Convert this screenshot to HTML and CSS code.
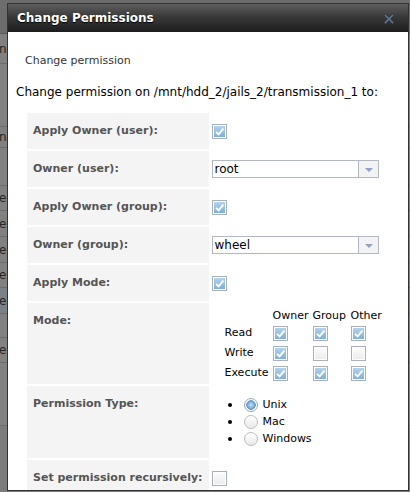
FILE: index.html
```html
<!DOCTYPE html>
<html lang="en">
<head>
    <meta charset="UTF-8">
    <meta name="viewport" content="width=device-width, initial-scale=1.0">
    <title>Change Permissions</title>
    <link rel="stylesheet" href="styles.css">
</head>
<body>
    <!-- page behind the modal, dimmed -->
    <div class="backdrop">
        <div class="bd-row bd-head"></div>
        <div class="bd-row h29"><span>nc</span></div>
        <div class="bd-row h62"></div>
        <div class="bd-row h20"><span>np</span></div>
        <div class="bd-row h37"></div>
        <div class="bd-row h24"><span>er</span></div>
        <div class="bd-row h25"><span>er</span></div>
        <div class="bd-row h25"><span>er</span></div>
        <div class="bd-row h24"><span>er</span></div>
        <div class="bd-row h25 bd-sel"><span>er</span></div>
        <div class="bd-row h23"></div>
        <div class="bd-row h24"><span>er</span></div>
        <div class="bd-row h62"></div>
    </div>

    <div class="dialog">
        <div class="dialog-title">
            <span>Change Permissions</span>
            <svg class="close" width="10" height="10" viewBox="0 0 10 10">
                <path d="M1.5 1.5 L8.5 8.5 M8.5 1.5 L1.5 8.5" stroke="#2f3840" stroke-width="3.4" stroke-linecap="square"/>
                <path d="M1.5 1.5 L8.5 8.5 M8.5 1.5 L1.5 8.5" stroke="#5f7184" stroke-width="1.6" stroke-linecap="square"/>
            </svg>
        </div>

        <div class="dialog-body">
            <div class="legend">Change permission</div>
            <div class="intro">Change permission on /mnt/hdd_2/jails_2/transmission_1 to:</div>

            <table class="form">
                <tr>
                    <th>Apply Owner (user):</th>
                    <td><span class="cb checked"><svg viewBox="0 0 13 13"><path d="M3 6.8 L5.6 9.4 L10.4 3.6"/></svg></span></td>
                </tr>
                <tr>
                    <th>Owner (user):</th>
                    <td><div class="select"><span>root</span><i></i></div></td>
                </tr>
                <tr>
                    <th>Apply Owner (group):</th>
                    <td><span class="cb checked"><svg viewBox="0 0 13 13"><path d="M3 6.8 L5.6 9.4 L10.4 3.6"/></svg></span></td>
                </tr>
                <tr>
                    <th>Owner (group):</th>
                    <td><div class="select"><span>wheel</span><i></i></div></td>
                </tr>
                <tr>
                    <th>Apply Mode:</th>
                    <td><span class="cb checked"><svg viewBox="0 0 13 13"><path d="M3 6.8 L5.6 9.4 L10.4 3.6"/></svg></span></td>
                </tr>
                <tr>
                    <th>Mode:</th>
                    <td class="top">
                        <div class="mode">
                            <span></span><span>Owner</span><span>Group</span><span>Other</span>

                            <span>Read</span>
                            <span><span class="cb checked"><svg viewBox="0 0 13 13"><path d="M3 6.8 L5.6 9.4 L10.4 3.6"/></svg></span></span>
                            <span><span class="cb checked"><svg viewBox="0 0 13 13"><path d="M3 6.8 L5.6 9.4 L10.4 3.6"/></svg></span></span>
                            <span><span class="cb checked"><svg viewBox="0 0 13 13"><path d="M3 6.8 L5.6 9.4 L10.4 3.6"/></svg></span></span>

                            <span>Write</span>
                            <span><span class="cb checked"><svg viewBox="0 0 13 13"><path d="M3 6.8 L5.6 9.4 L10.4 3.6"/></svg></span></span>
                            <span><span class="cb"></span></span>
                            <span><span class="cb"></span></span>

                            <span>Execute</span>
                            <span><span class="cb checked"><svg viewBox="0 0 13 13"><path d="M3 6.8 L5.6 9.4 L10.4 3.6"/></svg></span></span>
                            <span><span class="cb checked"><svg viewBox="0 0 13 13"><path d="M3 6.8 L5.6 9.4 L10.4 3.6"/></svg></span></span>
                            <span><span class="cb checked"><svg viewBox="0 0 13 13"><path d="M3 6.8 L5.6 9.4 L10.4 3.6"/></svg></span></span>
                        </div>
                    </td>
                </tr>
                <tr>
                    <th>Permission Type:</th>
                    <td class="top">
                        <ul class="radios">
                            <li><span class="radio on"></span>Unix</li>
                            <li><span class="radio"></span>Mac</li>
                            <li><span class="radio"></span>Windows</li>
                        </ul>
                    </td>
                </tr>
                <tr>
                    <th>Set permission recursively:</th>
                    <td><span class="cb"></span></td>
                </tr>
            </table>
        </div>
    </div>
</body>
</html>
```

FILE: styles.css
```css
body {
    margin: 0;
    background: #7c7c7c;
    font-family: "DejaVu Sans", Verdana, sans-serif;
    font-size: 12px;
    height: 492px;
    overflow: hidden;
}

/* dimmed page underneath */
.backdrop { width: 100%; }
.bd-row {
    border-bottom: 1px solid #6c6c6c;
    background: #818181;
    color: #262626;
    font-size: 12px;
    display: flex;
    align-items: center;
    overflow: hidden;
}
.bd-row span { margin-left: -1px; }
.bd-head { height: 33px; background: #6d6d6d; border-bottom-color: #5a5a5a; }
.bd-sel { background: #7b8189; }
.h20 { height: 20px; }
.h23 { height: 23px; }
.h24 { height: 24px; }
.h25 { height: 25px; }
.h29 { height: 29px; }
.h37 { height: 37px; }
.h62 { height: 62px; }

/* modal */
.dialog {
    position: absolute;
    left: 7px;
    top: 3px;
    width: 400px;
    height: 486px;
    border: 1px solid #333;
    background: #fff;
    overflow: hidden;
}
.dialog-title {
    height: 28px;
    background: linear-gradient(#5e5e5e, #3a3a3a 45%, #1d1d1d);
    display: flex;
    align-items: center;
    justify-content: space-between;
    padding: 0 14px 0 9px;
    color: #fff;
    font-weight: bold;
    font-size: 12px;
    text-shadow: 0 1px 1px #000;
}
.close { margin-top: 1px; }

.dialog-body { padding: 0 8px; }
.legend {
    margin-top: 21px;
    padding-left: 9px;
    font-size: 11px;
    line-height: 16px;
    color: #333;
}
.intro {
    margin-top: 15px;
    line-height: 16px;
    color: #000;
}

/* form table */
.form {
    margin: 11px 0 0 9px;
    border-collapse: separate;
    border-spacing: 2px;
}
.form th {
    width: 169px;
    padding: 11px 6px;
    background: #f4f4f4;
    color: #555;
    font-size: 11px;
    line-height: 14px;
    text-align: left;
    vertical-align: top;
    white-space: nowrap;
}
.form td {
    padding: 0 1px;
    vertical-align: middle;
}
.form td.top { vertical-align: top; }

/* checkbox */
.cb {
    display: inline-block;
    box-sizing: border-box;
    width: 15px;
    height: 15px;
    border: 1px solid #a9b0bb;
    background: linear-gradient(#fdfdfd, #ebebeb);
    box-shadow: inset 0 0 0 1px #fff;
    vertical-align: middle;
}
.cb.checked {
    background: linear-gradient(#b9d5ee, #79acd9);
}
.cb svg {
    display: block;
    width: 13px;
    height: 13px;
}
.cb path {
    fill: none;
    stroke: #fff;
    stroke-width: 1.9;
}

/* select */
.select {
    box-sizing: border-box;
    width: 167px;
    height: 18px;
    border: 1px solid #b3b9c4;
    display: flex;
    align-items: center;
    justify-content: space-between;
    color: #000;
}
.select span { padding-left: 2px; }
.select i {
    width: 19px;
    height: 16px;
    border-left: 1px solid #b3b9c4;
    background: #f3f3f3;
    position: relative;
}
.select i::after {
    content: "";
    position: absolute;
    left: 6px;
    top: 7px;
    border-left: 4px solid transparent;
    border-right: 4px solid transparent;
    border-top: 4px solid #8ea3c8;
}

/* mode matrix */
.mode {
    display: grid;
    grid-template-columns: 48px 40px 38px auto;
    grid-template-rows: 18px 20px 20px 20px;
    margin: 2px 0 1px 13px;
    align-items: center;
    color: #000;
    font-size: 11px;
}
.mode > span { line-height: 16px; }
.mode > span:nth-child(-n+4) { align-self: end; line-height: 15px; }

/* permission type */
.radios {
    list-style: none;
    margin: 10px 0 11px;
    padding: 0 0 0 16px;
    color: #000;
    font-size: 11px;
}
.radios li {
    height: 17px;
    display: flex;
    align-items: center;
}
.radios li::before {
    content: "";
    width: 4px;
    height: 4px;
    border-radius: 50%;
    background: #000;
    margin-right: 12px;
}
.radio {
    box-sizing: border-box;
    width: 14px;
    height: 14px;
    border-radius: 50%;
    border: 1px solid #b9bdc4;
    background: linear-gradient(#fff, #e9e9e9);
    margin-right: 5px;
}
.radio.on {
    border-color: #9ea8b6;
    background: radial-gradient(circle at 50% 50%, #cfe3f5 0, #7fb1de 3px, #5e98cf 4.5px, #fff 5px, #f0f0f0 7px);
}
```
